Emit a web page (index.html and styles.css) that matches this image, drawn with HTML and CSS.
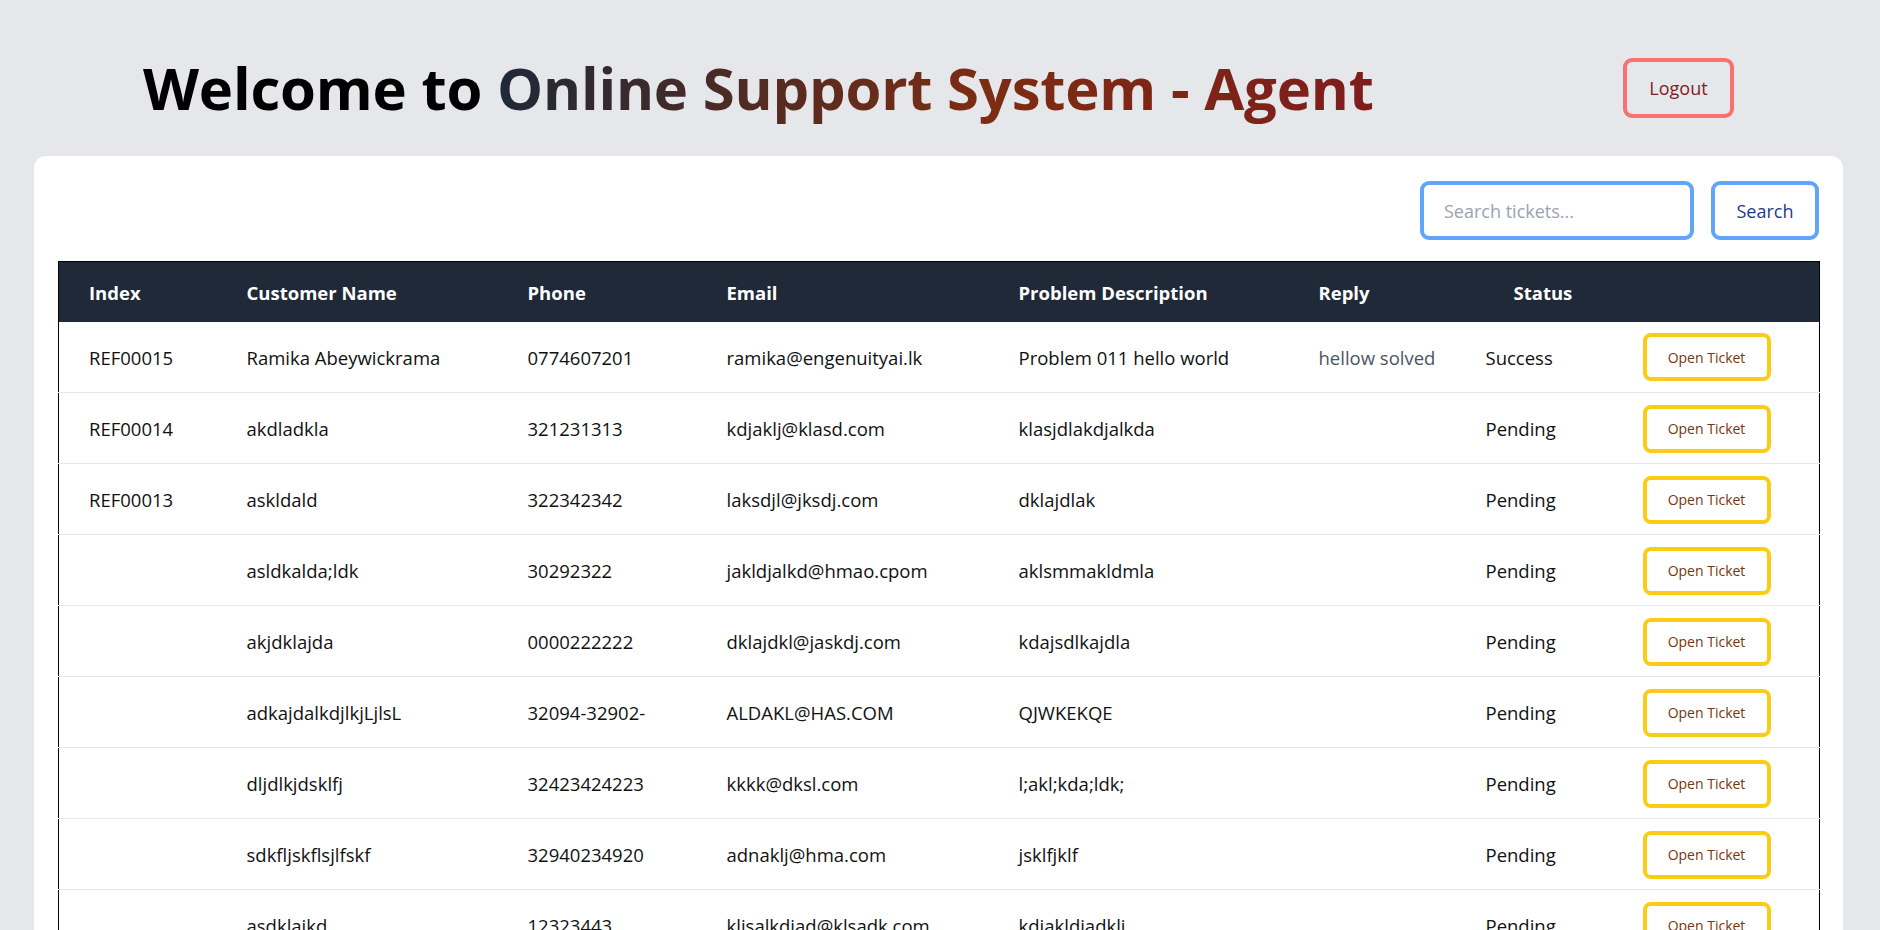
FILE: index.html
```html
<!DOCTYPE html>
<html lang="en">
<head>
<meta charset="utf-8">
<title>Online Support System - Agent</title>
<link rel="stylesheet" href="styles.css">
</head>
<body>
<div class="page">
  <header class="topbar">
    <h1 class="title">Welcome to <span class="grad">Online Support System - Agent</span></h1>
    <button class="logout">Logout</button>
  </header>
  <main class="card">
    <div class="searchbar">
      <input class="search-input" type="text" placeholder="Search tickets...">
      <button class="search-btn">Search</button>
    </div>
    <table class="tickets">
      <colgroup>
        <col class="c-index"><col class="c-name"><col class="c-phone"><col class="c-email"><col class="c-prob"><col class="c-reply"><col class="c-status"><col class="c-action">
      </colgroup>
      <thead>
        <tr>
          <th>Index</th><th>Customer Name</th><th>Phone</th><th>Email</th><th>Problem Description</th><th>Reply</th><th class="th-status">Status</th><th></th>
        </tr>
      </thead>
      <tbody>
        <tr><td>REF00015</td><td>Ramika Abeywickrama</td><td>0774607201</td><td>ramika@engenuityai.lk</td><td>Problem 011 hello world</td><td class="reply">hellow solved</td><td>Success</td><td><button class="open-btn">Open Ticket</button></td></tr>
        <tr><td>REF00014</td><td>akdladkla</td><td>321231313</td><td>kdjaklj@klasd.com</td><td>klasjdlakdjalkda</td><td class="reply"></td><td>Pending</td><td><button class="open-btn">Open Ticket</button></td></tr>
        <tr><td>REF00013</td><td>askldald</td><td>322342342</td><td>laksdjl@jksdj.com</td><td>dklajdlak</td><td class="reply"></td><td>Pending</td><td><button class="open-btn">Open Ticket</button></td></tr>
        <tr><td></td><td>asldkalda;ldk</td><td>30292322</td><td>jakldjalkd@hmao.cpom</td><td>aklsmmakldmla</td><td class="reply"></td><td>Pending</td><td><button class="open-btn">Open Ticket</button></td></tr>
        <tr><td></td><td>akjdklajda</td><td>0000222222</td><td>dklajdkl@jaskdj.com</td><td>kdajsdlkajdla</td><td class="reply"></td><td>Pending</td><td><button class="open-btn">Open Ticket</button></td></tr>
        <tr><td></td><td>adkajdalkdjlkjLjlsL</td><td>32094-32902-</td><td>ALDAKL@HAS.COM</td><td>QJWKEKQE</td><td class="reply"></td><td>Pending</td><td><button class="open-btn">Open Ticket</button></td></tr>
        <tr><td></td><td>dljdlkjdsklfj</td><td>32423424223</td><td>kkkk@dksl.com</td><td>l;akl;kda;ldk;</td><td class="reply"></td><td>Pending</td><td><button class="open-btn">Open Ticket</button></td></tr>
        <tr><td></td><td>sdkfljskflsjlfskf</td><td>32940234920</td><td>adnaklj@hma.com</td><td>jsklfjklf</td><td class="reply"></td><td>Pending</td><td><button class="open-btn">Open Ticket</button></td></tr>
        <tr><td></td><td>asdklajkd</td><td>12323443</td><td>kljsalkdjad@klsadk.com</td><td>kdjakldjadklj</td><td class="reply"></td><td>Pending</td><td><button class="open-btn">Open Ticket</button></td></tr>
      </tbody>
    </table>
  </main>
</div>
</body>
</html>
```
FILE: styles.css
```css
* { box-sizing: border-box; }
html, body { margin: 0; padding: 0; }
body {
  background: #e5e7eb;
  font-family: "Open Sans", "Noto Sans", sans-serif;
  color: #111;
  overflow: hidden;
}
.page {
  padding: 26px 37px 0 34px;
}
.topbar {
  height: 124px;
  display: flex;
  align-items: center;
  justify-content: space-between;
  padding: 0 109px 0 109px;
}
.title {
  margin: 0;
  font-size: 58px;
  line-height: 60px;
  font-weight: 700;
  color: #000;
  letter-spacing: -0.2px;
}
.grad {
  background: linear-gradient(90deg, #1f2937 0%, #7c2d12 55%, #7f1d1d 100%);
  -webkit-background-clip: text;
  background-clip: text;
  color: transparent;
}
.logout {
  width: 111px;
  height: 60px;
  border: 4px solid #f87171;
  border-radius: 9px;
  background: transparent;
  color: #7f1d1d;
  font-family: inherit;
  font-size: 18px;
}
.card {
  margin-top: 6px;
  background: #fff;
  border-radius: 12px;
  padding: 25px 24px 40px 24px;
  height: 800px;
}
.searchbar {
  display: flex;
  justify-content: flex-end;
  gap: 17px;
  margin-bottom: 21px;
}
.search-input {
  width: 274px;
  height: 59px;
  border: 4px solid #60a5fa;
  border-radius: 9px;
  padding: 0 20px;
  font-family: inherit;
  font-size: 18px;
  color: #111;
  outline: none;
}
.search-input::placeholder { color: #9ca3af; }
.search-btn {
  width: 108px;
  height: 59px;
  border: 4px solid #60a5fa;
  border-radius: 9px;
  background: #fff;
  color: #1e3a8a;
  font-family: inherit;
  font-size: 18px;
}
.tickets {
  width: 1761px;
  border-collapse: collapse;
  table-layout: fixed;
  border: 1px solid #000;
  font-size: 18.5px;
}
.c-index { width: 158px; }
.c-name { width: 281px; }
.c-phone { width: 199px; }
.c-email { width: 292px; }
.c-prob { width: 300px; }
.c-reply { width: 167px; }
.c-status { width: 157px; }
.c-action { width: 207px; }
.tickets thead tr { background: #1f2937; }
.tickets th {
  height: 60px;
  padding: 2px 0 0 30px;
  text-align: left;
  color: #fff;
  font-weight: 700;
  font-size: 18.5px;
}
.tickets th.th-status { padding-left: 58px; }
.tickets td {
  height: 71px;
  padding: 1px 0 0 30px;
  border-bottom: 1px solid #e5e7eb;
  color: #111;
  white-space: nowrap;
  vertical-align: middle;
}
.tickets td.reply { color: #4b5563; }
.open-btn {
  width: 128px;
  height: 48px;
  border: 4px solid #facc15;
  border-radius: 8px;
  background: #fff;
  color: #78350f;
  font-family: inherit;
  font-size: 14px;
}
```
